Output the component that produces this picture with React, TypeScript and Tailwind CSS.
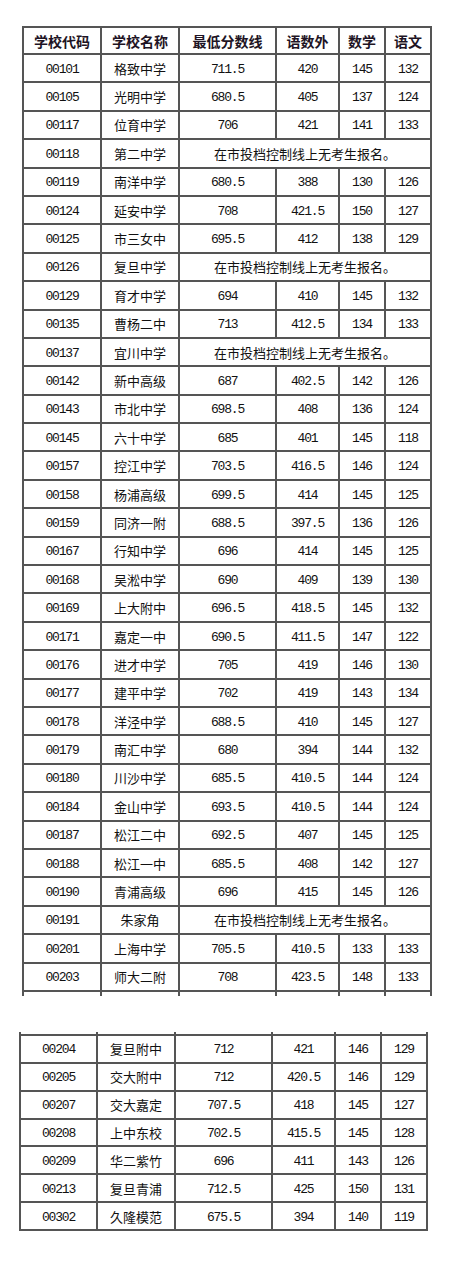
import React from "react";

type Row = (string | null)[];

const rows1: Row[] = [
  ["00101", "格致中学", "711.5", "420", "145", "132"],
  ["00105", "光明中学", "680.5", "405", "137", "124"],
  ["00117", "位育中学", "706", "421", "141", "133"],
  ["00118", "第二中学", null],
  ["00119", "南洋中学", "680.5", "388", "130", "126"],
  ["00124", "延安中学", "708", "421.5", "150", "127"],
  ["00125", "市三女中", "695.5", "412", "138", "129"],
  ["00126", "复旦中学", null],
  ["00129", "育才中学", "694", "410", "145", "132"],
  ["00135", "曹杨二中", "713", "412.5", "134", "133"],
  ["00137", "宜川中学", null],
  ["00142", "新中高级", "687", "402.5", "142", "126"],
  ["00143", "市北中学", "698.5", "408", "136", "124"],
  ["00145", "六十中学", "685", "401", "145", "118"],
  ["00157", "控江中学", "703.5", "416.5", "146", "124"],
  ["00158", "杨浦高级", "699.5", "414", "145", "125"],
  ["00159", "同济一附", "688.5", "397.5", "136", "126"],
  ["00167", "行知中学", "696", "414", "145", "125"],
  ["00168", "吴淞中学", "690", "409", "139", "130"],
  ["00169", "上大附中", "696.5", "418.5", "145", "132"],
  ["00171", "嘉定一中", "690.5", "411.5", "147", "122"],
  ["00176", "进才中学", "705", "419", "146", "130"],
  ["00177", "建平中学", "702", "419", "143", "134"],
  ["00178", "洋泾中学", "688.5", "410", "145", "127"],
  ["00179", "南汇中学", "680", "394", "144", "132"],
  ["00180", "川沙中学", "685.5", "410.5", "144", "124"],
  ["00184", "金山中学", "693.5", "410.5", "144", "124"],
  ["00187", "松江二中", "692.5", "407", "145", "125"],
  ["00188", "松江一中", "685.5", "408", "142", "127"],
  ["00190", "青浦高级", "696", "415", "145", "126"],
  ["00191", "朱家角", null],
  ["00201", "上海中学", "705.5", "410.5", "133", "133"],
  ["00203", "师大二附", "708", "423.5", "148", "133"],
];

const rows2: Row[] = [
  ["00204", "复旦附中", "712", "421", "146", "129"],
  ["00205", "交大附中", "712", "420.5", "146", "129"],
  ["00207", "交大嘉定", "707.5", "418", "145", "127"],
  ["00208", "上中东校", "702.5", "415.5", "145", "128"],
  ["00209", "华二紫竹", "696", "411", "143", "126"],
  ["00213", "复旦青浦", "712.5", "425", "150", "131"],
  ["00302", "久隆模范", "675.5", "394", "140", "119"],
];

const W1 = ["w-[78px]", "w-[78px]", "w-[97px]", "w-[63px]", "w-[46px]", "w-[46px]"];
const W2 = ["w-[77px]", "w-[78px]", "w-[97px]", "w-[63px]", "w-[46px]", "w-[46px]"];
const SPAN1 = "w-[252px]";
const SPAN2 = "w-[252px]";

const cjk = "font-['Noto_Sans_CJK_SC',sans-serif]";
const mono = "font-['Liberation_Mono','Noto_Sans_CJK_SC',monospace]";
const line = "border-[#555]";

function Cell({ w, children, kind, h }: { w: string; children?: React.ReactNode; kind: "num" | "cjk" | "head"; h: string }) {
  const f =
    kind === "num"
      ? `${mono} text-[13px] tracking-[-1.2px] text-[#111] pt-[2px]`
      : kind === "cjk"
      ? `${cjk} text-[13px] text-[#111]`
      : `${cjk} text-[14px] font-bold text-[#1e1424]`;
  return (
    <div className={`${w} ${h} shrink-0 border-r-2 border-b-2 ${line} flex items-center justify-center leading-none ${f}`}>
      {children}
    </div>
  );
}

function DataRows({ rows, W, span, h }: { rows: Row[]; W: string[]; span: string; h: string }) {
  return (
    <>
      {rows.map((r) => (
        <div key={r[0] as string} className="flex">
          <Cell w={W[0]} kind="num" h={h}>{r[0]}</Cell>
          <Cell w={W[1]} kind="cjk" h={h}>{r[1]}</Cell>
          {r[2] === null || r[2] === undefined ? (
            <Cell w={span} kind="cjk" h={h}>在市投档控制线上无考生报名。</Cell>
          ) : (
            <>
              <Cell w={W[2]} kind="num" h={h}>{r[2]}</Cell>
              <Cell w={W[3]} kind="num" h={h}>{r[3]}</Cell>
              <Cell w={W[4]} kind="num" h={h}>{r[4]}</Cell>
              <Cell w={W[5]} kind="num" h={h}>{r[5]}</Cell>
            </>
          )}
        </div>
      ))}
    </>
  );
}

function Stubs({ W, h }: { W: string[]; h: string }) {
  return (
    <div className={`flex border-l-2 ${line}`}>
      {W.map((w, i) => (
        <div key={i} className={`${w} ${h} shrink-0 border-r-2 ${line}`} />
      ))}
    </div>
  );
}

export default function App() {
  const heads = ["学校代码", "学校名称", "最低分数线", "语数外", "数学", "语文"];
  return (
    <div className="w-[461px] h-[1272px] bg-white overflow-hidden">
      <div className="pt-[26px] pl-[22px]">
        <div className={`w-fit border-l-2 border-t-2 ${line}`}>
          <div className="flex">
            {heads.map((t, i) => (
              <Cell key={t} w={W1[i]} kind="head" h="h-[27px]">{t}</Cell>
            ))}
          </div>
          <DataRows rows={rows1} W={W1} span={SPAN1} h="h-[28.4px]" />
        </div>
        <div className="w-fit">
          <Stubs W={W1} h="h-[4px]" />
        </div>
      </div>
      <div className="pt-[36px] pl-[19px]">
        <div className="w-fit">
          <Stubs W={W2} h="h-[2px]" />
        </div>
        <div className={`w-fit border-l-2 border-t-2 ${line}`}>
          <DataRows rows={rows2} W={W2} span={SPAN2} h="h-[27.9px]" />
        </div>
      </div>
    </div>
  );
}
